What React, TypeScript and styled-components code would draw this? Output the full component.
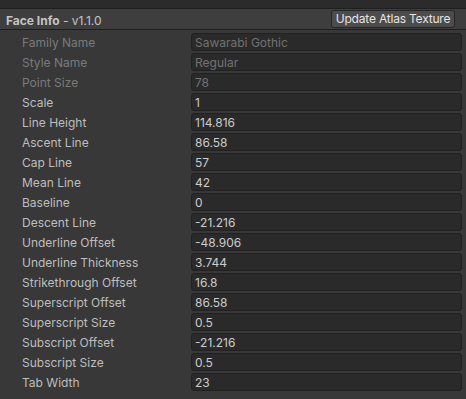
import styled, { createGlobalStyle } from 'styled-components';

const GlobalStyle = createGlobalStyle`
  html, body {
    margin: 0;
    padding: 0;
    background: #383838;
    font-family: Inter, "Noto Sans", sans-serif;
    font-size: 12px;
  }
`;

const Panel = styled.div`
  width: 466px;
  height: 399px;
  display: flex;
  flex-direction: column;
  background: #383838;
  overflow: hidden;
`;

const TopStrip = styled.div`
  height: 8px;
  background: #2b2b2b;
  border-bottom: 1px solid #1f1f1f;
`;

const Header = styled.div`
  height: 20px;
  display: flex;
  align-items: center;
  justify-content: space-between;
  padding: 0 11px 0 6px;
  background: #3e3e3e;
  border-bottom: 1px solid #1f1f1f;
`;

const Title = styled.div`
  color: #c4c4c4;
  font-size: 12px;
  padding-top: 3px;

  b {
    font-weight: 700;
  }
`;

const UpdateButton = styled.button`
  height: 18px;
  width: 124px;
  padding: 0;
  border: 1px solid #262626;
  border-radius: 3px;
  background: #4c4c4c;
  color: #e4e4e4;
  font-family: Inter, "Noto Sans", sans-serif;
  font-size: 12px;
  letter-spacing: -0.2px;
  line-height: 16px;
`;

const Body = styled.div`
  display: grid;
  grid-template-columns: 169px 271px;
  grid-auto-rows: 18px;
  row-gap: 2px;
  padding: 3px 4px 0 22px;
`;

const Label = styled.div<{ $disabled?: boolean }>`
  display: flex;
  align-items: center;
  padding-top: 1px;
  color: ${(p) => (p.$disabled ? '#7a7a7a' : '#bebebe')};
`;

const Field = styled.div<{ $disabled?: boolean }>`
  display: flex;
  align-items: center;
  box-sizing: border-box;
  padding: 1px 3px 0;
  border: 1px solid #212121;
  border-radius: 3px;
  background: #2a2a2a;
  color: ${(p) => (p.$disabled ? '#727272' : '#cccccc')};
`;

const rows: [string, string, boolean?][] = [
  ['Family Name', 'Sawarabi Gothic', true],
  ['Style Name', 'Regular', true],
  ['Point Size', '78', true],
  ['Scale', '1'],
  ['Line Height', '114.816'],
  ['Ascent Line', '86.58'],
  ['Cap Line', '57'],
  ['Mean Line', '42'],
  ['Baseline', '0'],
  ['Descent Line', '-21.216'],
  ['Underline Offset', '-48.906'],
  ['Underline Thickness', '3.744'],
  ['Strikethrough Offset', '16.8'],
  ['Superscript Offset', '86.58'],
  ['Superscript Size', '0.5'],
  ['Subscript Offset', '-21.216'],
  ['Subscript Size', '0.5'],
  ['Tab Width', '23'],
];

const App = () => {
  return (
    <>
      <GlobalStyle />
      <Panel>
        <TopStrip />
        <Header>
          <Title>
            <b>Face Info</b> - v1.1.0
          </Title>
          <UpdateButton>Update Atlas Texture</UpdateButton>
        </Header>
        <Body>
          {rows.map(([label, value, disabled]) => (
            <>
              <Label key={label} $disabled={disabled}>
                {label}
              </Label>
              <Field key={label + '-v'} $disabled={disabled}>
                {value}
              </Field>
            </>
          ))}
        </Body>
      </Panel>
    </>
  );
};

export default App;
